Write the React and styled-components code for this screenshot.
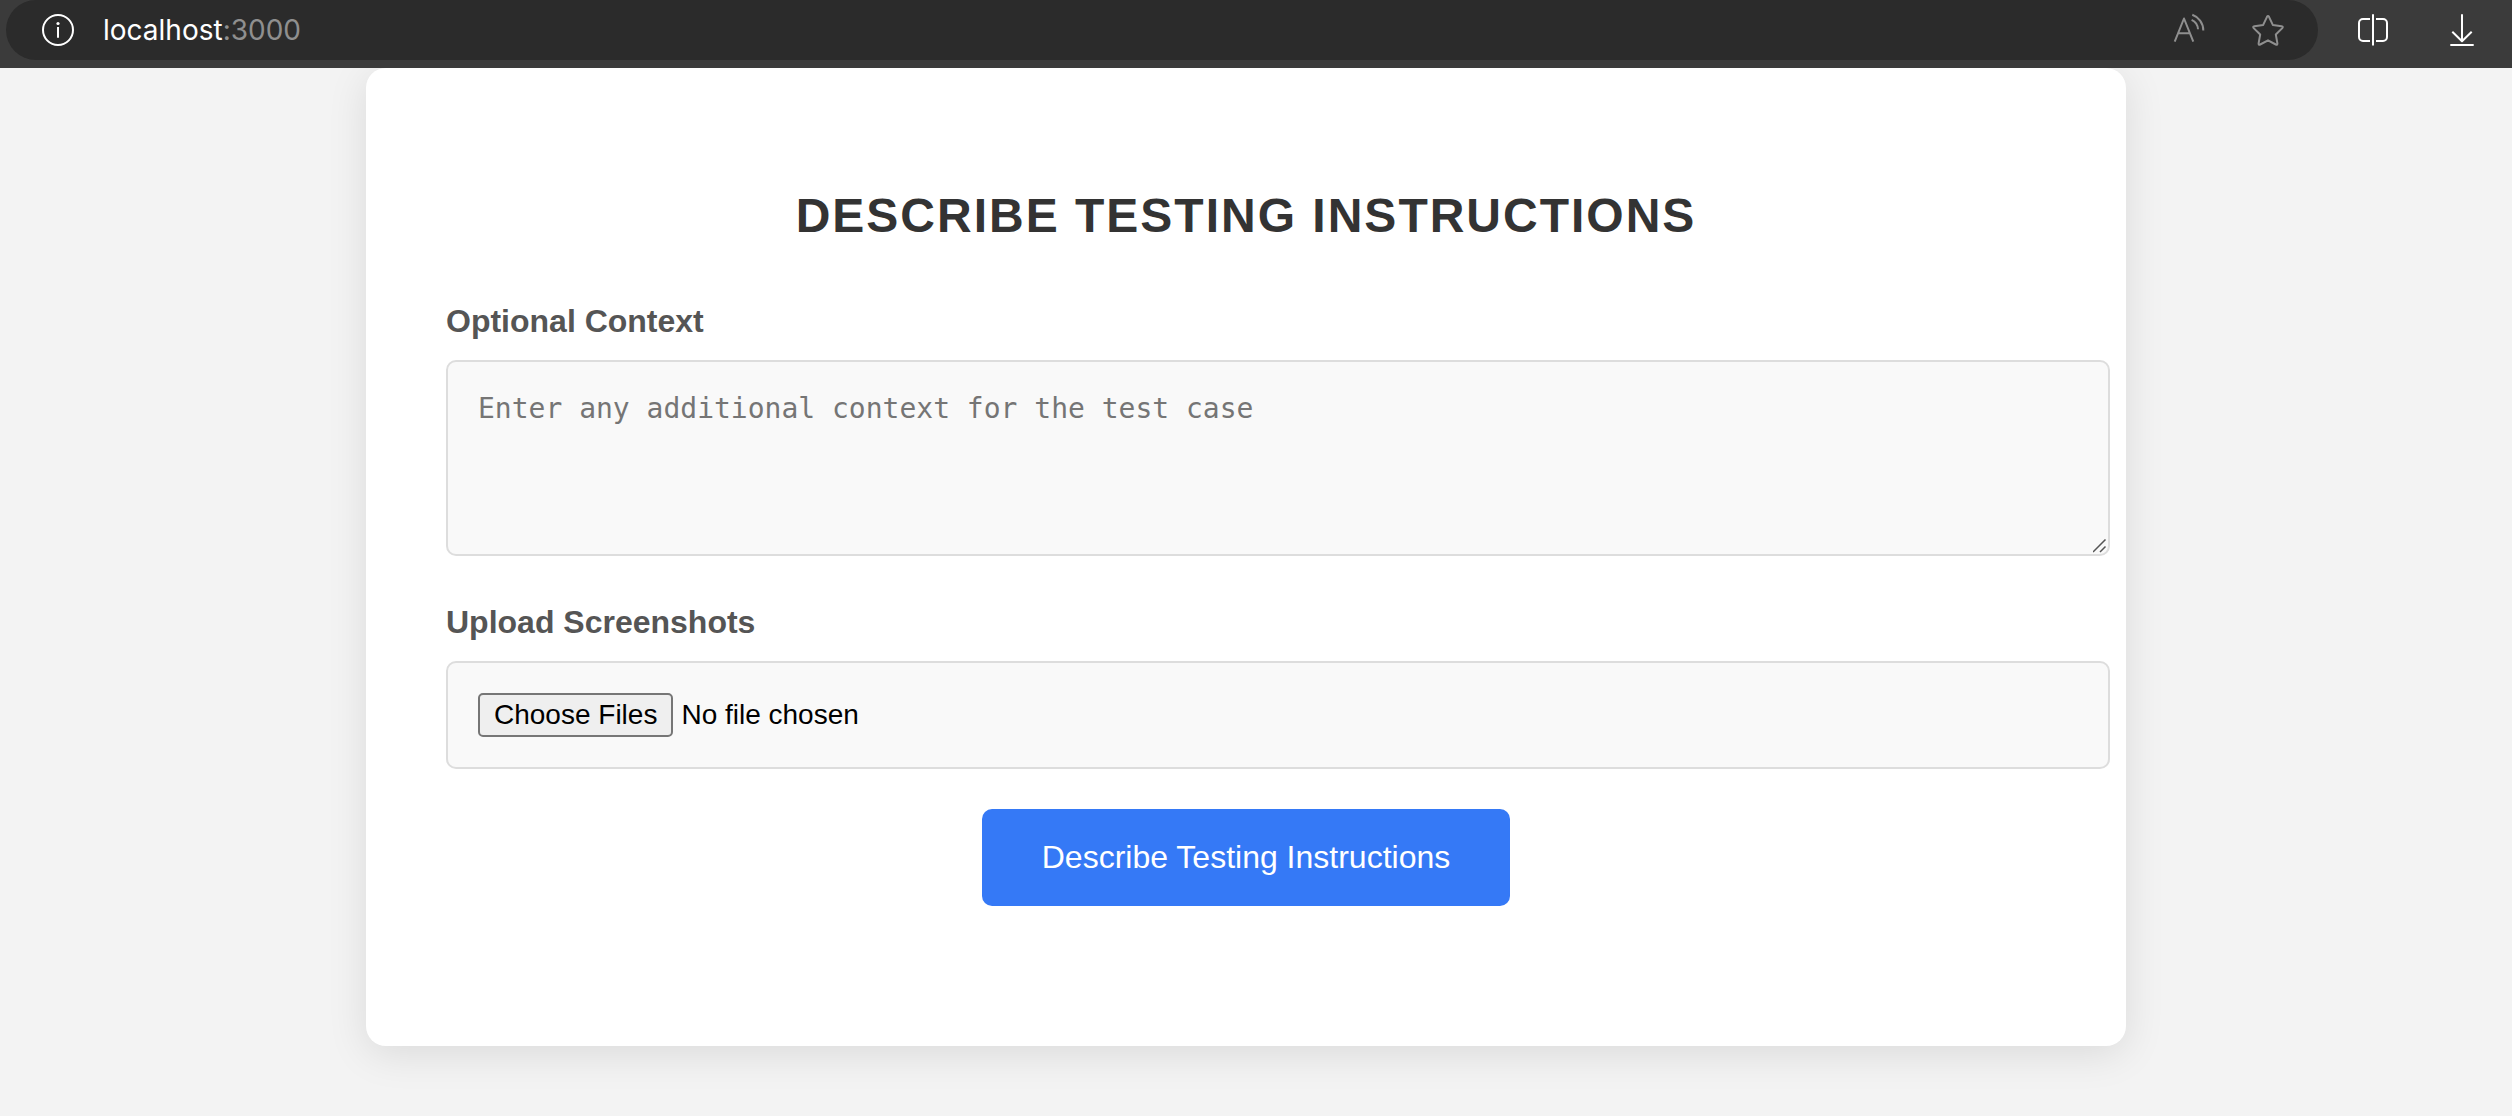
import React from "react";
import styled, { createGlobalStyle } from "styled-components";

const GlobalStyle = createGlobalStyle`
  body {
    margin: 0;
    background: #f3f3f3;
    font-family: "Liberation Sans", Arial, Helvetica, sans-serif;
  }
`;

const BrowserBar = styled.header`
  display: flex;
  align-items: flex-start;
  height: 68px;
  padding: 0 32px 0 6px;
  box-sizing: border-box;
  background: #3b3b3b;
  position: relative;
`;

const AddressBar = styled.div`
  flex: 1;
  display: flex;
  align-items: center;
  height: 60px;
  padding: 0 32px 0 34px;
  box-sizing: border-box;
  border-radius: 30px;
  background: #2b2b2b;
`;

const Url = styled.span`
  flex: 1;
  margin-left: 27px;
  color: #fff;
  font: 400 28px/36px Inter, sans-serif;
`;

const Port = styled.span`
  color: #8f8f8f;
`;

const AddressActions = styled.div`
  display: flex;
  gap: 43px;
`;

const BarActions = styled.nav`
  display: flex;
  align-items: center;
  gap: 53px;
  height: 60px;
  margin-left: 37px;
`;

const IconButton = styled.button`
  display: block;
  width: 36px;
  height: 36px;
  padding: 0;
  border: 0;
  background: none;
  color: ${({ $muted }) => ($muted ? "#8f8f8f" : "#fff")};
  cursor: pointer;
`;

const Glyph = styled.svg`
  display: block;
  width: 36px;
  height: 36px;
  fill: none;
  stroke: currentColor;
  stroke-width: 2;
  stroke-linejoin: round;
`;

const Page = styled.main`
  padding: 0 20px 70px 0;
  overflow: hidden;
`;

const Card = styled.section`
  max-width: 1600px;
  margin: 0 auto;
  padding: 80px;
  border-radius: 20px;
  background: #fff;
  box-shadow: 0 8px 40px rgba(0, 0, 0, 0.1);
`;

const Title = styled.h1`
  margin: 40px 0 60px;
  color: #333;
  font-size: 48px;
  line-height: 55px;
  letter-spacing: 2px;
  text-align: center;
  text-transform: uppercase;
`;

const Form = styled.form`
  display: flex;
  flex-direction: column;
  margin-bottom: 60px;
`;

const Label = styled.label`
  margin-bottom: 20px;
  color: #555;
  font-size: 32px;
  font-weight: bold;
  line-height: 37px;
`;

const fieldStyles = `
  width: 100%;
  padding: 30px;
  border: 2px solid #ddd;
  border-radius: 10px;
  background: #f9f9f9;
  font-size: 28px;
`;

const ContextInput = styled.textarea`
  ${fieldStyles}
  height: 132px;
  margin: 0 0 48px;
  font-family: "DejaVu Sans Mono", monospace;
  resize: vertical;

  &::placeholder {
    color: #757575;
  }

  &::-webkit-resizer {
    background: url("data:image/svg+xml,%3Csvg xmlns='http://www.w3.org/2000/svg' width='16' height='16'%3E%3Cpath d='M1 14 13.5 1.5M8 14 13.5 8.5' stroke='%23555' stroke-width='1.5' fill='none'/%3E%3C/svg%3E")
      no-repeat right bottom;
  }
`;

const FileInput = styled.input`
  ${fieldStyles}
  height: 44px;
  margin: 0 0 40px;
  color: #000;
  font-family: inherit;

  &::file-selector-button {
    height: 44px;
    margin: 0 8px 0 0;
    padding: 0 14px;
    box-sizing: border-box;
    border: 2px solid #767676;
    border-radius: 5px;
    background: #efefef;
    color: #000;
    font: inherit;
  }
`;

const SubmitButton = styled.button`
  align-self: center;
  padding: 30px 60px;
  border: 0;
  border-radius: 10px;
  background: #3579f6;
  color: #fff;
  font-family: inherit;
  font-size: 32px;
  line-height: 37px;
  cursor: pointer;
`;

function InfoIcon() {
  return (
    <Glyph viewBox="0 0 36 36" aria-hidden="true">
      <circle cx="18" cy="18" r="15" />
      <path d="M18 15V25.8" />
      <circle cx="18" cy="11.5" r="1.6" fill="currentColor" stroke="none" />
    </Glyph>
  );
}

function ReadAloudIcon() {
  return (
    <Glyph viewBox="0 0 36 36" aria-hidden="true">
      <path d="M3.7 29.7 13 6.5 22.3 29.7M7 21.2H19M21.3 2.8C27.5 5 32.3 11 32.3 18.5M20.6 7.8C24.4 9.5 26.8 13 27 17.3" />
    </Glyph>
  );
}

function StarIcon() {
  return (
    <Glyph viewBox="0 0 36 36" aria-hidden="true">
      <path d="M17 4.8Q18 3 19 4.8L22.8 12.9L31.6 14.2Q33.6 14.6 32.3 16.1L25.8 22.5L27.4 31.4Q27.6 33.3 25.8 32.5L18 28.3L10.2 32.5Q8.4 33.3 8.6 31.4L10.2 22.5L3.7 16.1Q2.4 14.6 4.4 14.2L13.2 12.9Z" />
    </Glyph>
  );
}

function SplitScreenIcon() {
  return (
    <Glyph viewBox="0 0 36 36" aria-hidden="true">
      <path d="M15 7H8a4 4 0 0 0-4 4V25a4 4 0 0 0 4 4H15M21 7H28a4 4 0 0 1 4 4V25a4 4 0 0 1-4 4H21M18 2.3V33.5" />
    </Glyph>
  );
}

function DownloadIcon() {
  return (
    <Glyph viewBox="0 0 36 36" aria-hidden="true">
      <path d="M18 2.3V29M8.3 19.8 18 29.3 27.7 19.8M6.3 33H29.7" />
    </Glyph>
  );
}

export default function App() {
  return (
    <>
      <GlobalStyle />
      <BrowserBar>
        <AddressBar>
          <IconButton type="button" aria-label="Site information">
            <InfoIcon />
          </IconButton>
          <Url>
            localhost<Port>:3000</Port>
          </Url>
          <AddressActions>
            <IconButton type="button" $muted aria-label="Read aloud">
              <ReadAloudIcon />
            </IconButton>
            <IconButton type="button" $muted aria-label="Add to favorites">
              <StarIcon />
            </IconButton>
          </AddressActions>
        </AddressBar>
        <BarActions>
          <IconButton type="button" aria-label="Split screen">
            <SplitScreenIcon />
          </IconButton>
          <IconButton type="button" aria-label="Downloads">
            <DownloadIcon />
          </IconButton>
        </BarActions>
      </BrowserBar>
      <Page>
        <Card>
          <Title>Describe Testing Instructions</Title>
          <Form onSubmit={(event) => event.preventDefault()}>
            <Label htmlFor="context">Optional Context</Label>
            <ContextInput
              id="context"
              placeholder="Enter any additional context for the test case"
            />
            <Label htmlFor="screenshots">Upload Screenshots</Label>
            <FileInput id="screenshots" type="file" accept="image/*" multiple />
            <SubmitButton type="submit">Describe Testing Instructions</SubmitButton>
          </Form>
        </Card>
      </Page>
    </>
  );
}
